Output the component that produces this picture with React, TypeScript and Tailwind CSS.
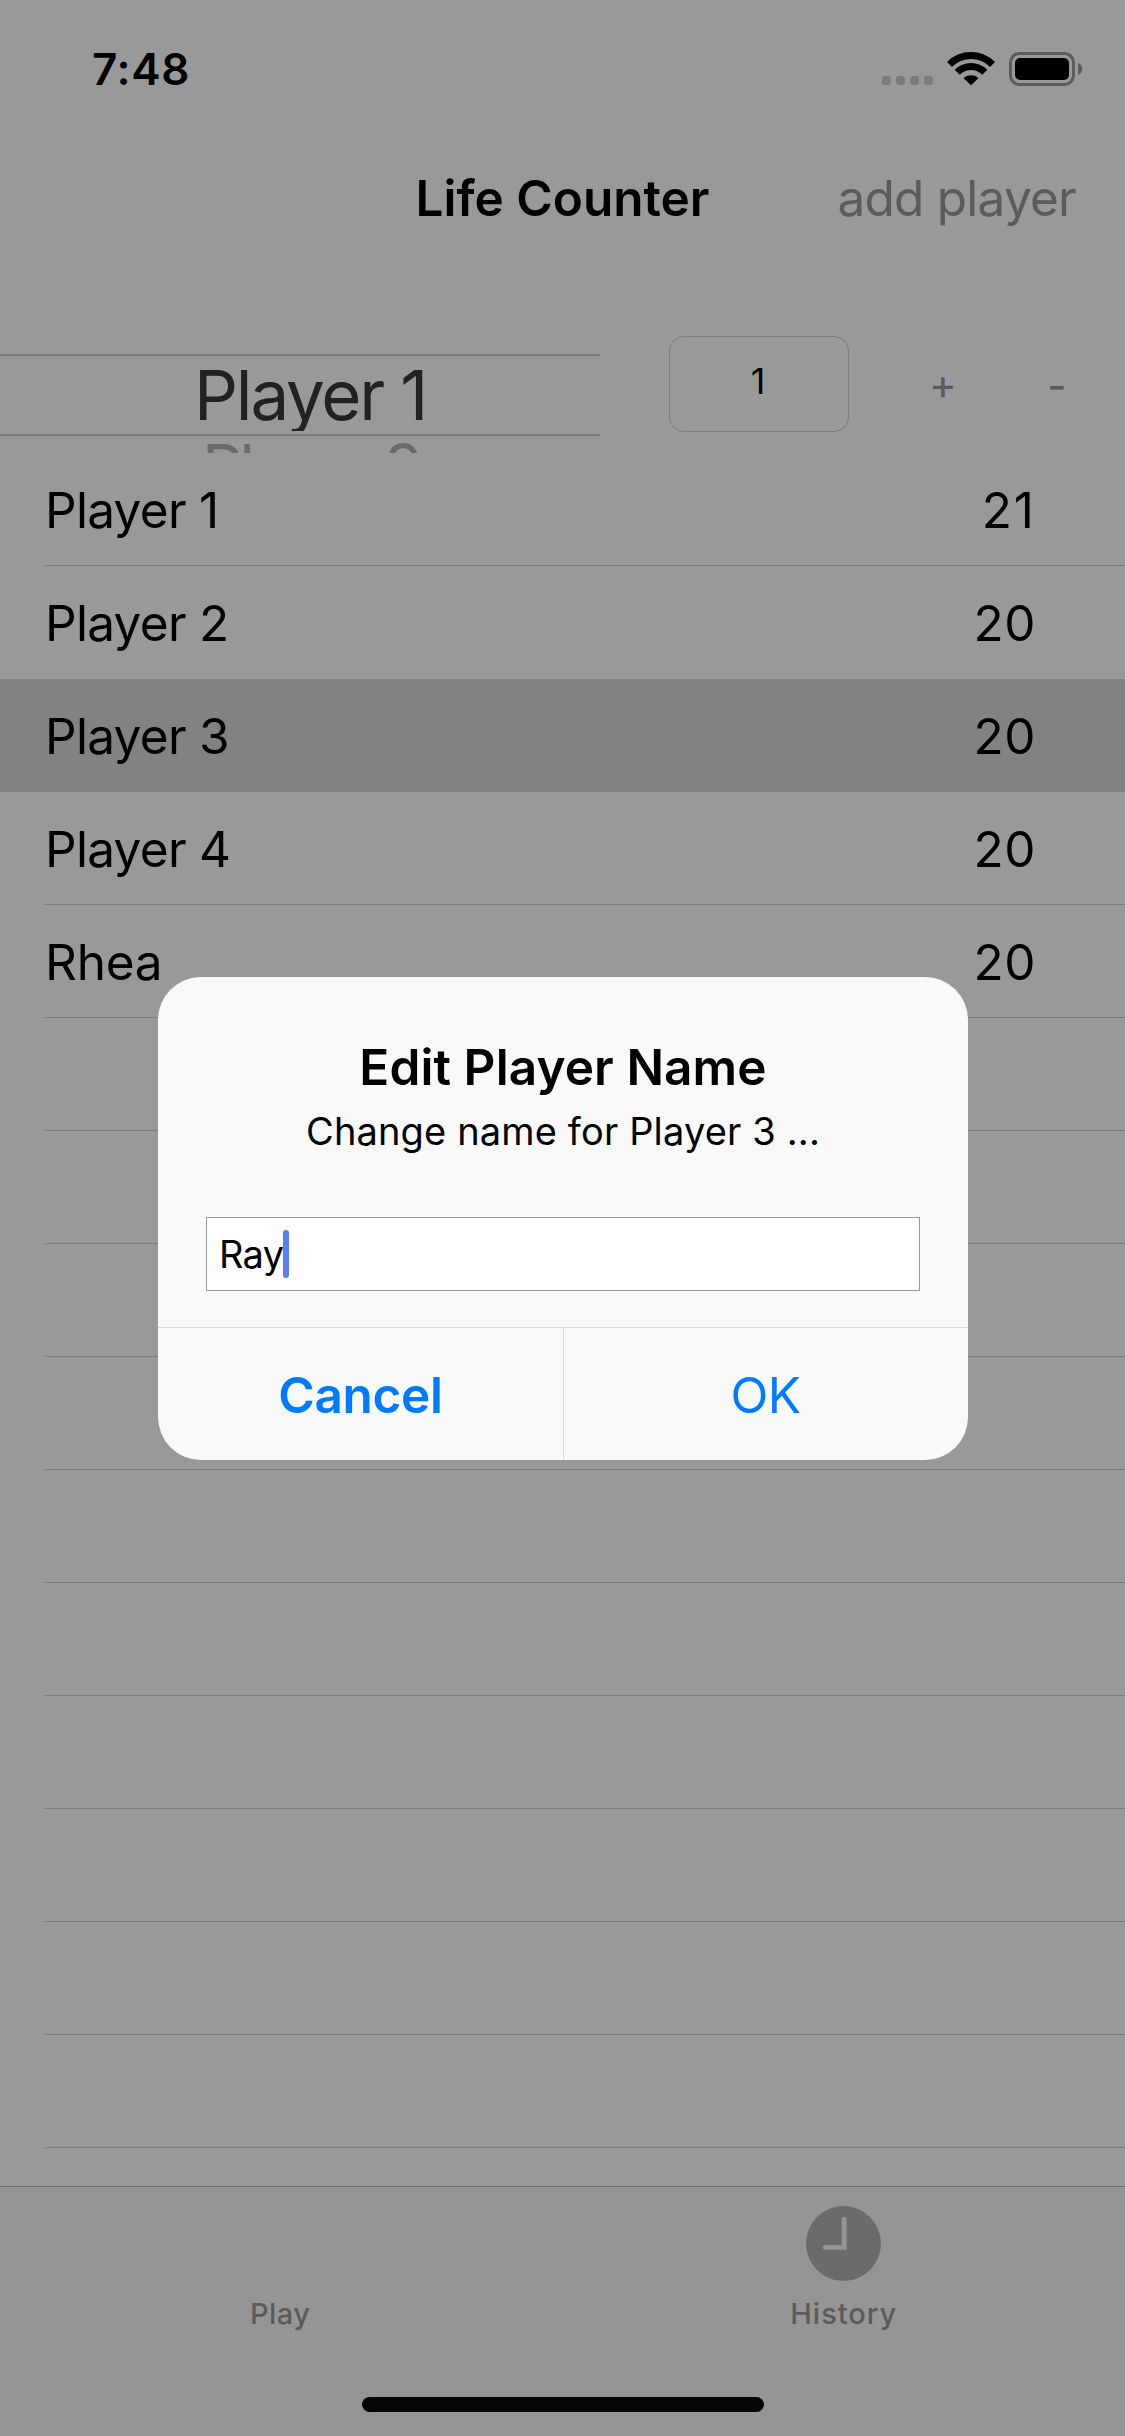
type Player = {
  name: string
  life: string
  nameTracking: string
  lifeTracking: string
  selected?: boolean
}

const players: Player[] = [
  { name: 'Player 1', life: '21', nameTracking: 'tracking-[-0.7px]', lifeTracking: 'tracking-[2px]' },
  { name: 'Player 2', life: '20', nameTracking: 'tracking-[-0.7px]', lifeTracking: 'tracking-[0.5px]' },
  { name: 'Player 3', life: '20', nameTracking: 'tracking-[-0.7px]', lifeTracking: 'tracking-[0.5px]', selected: true },
  { name: 'Player 4', life: '20', nameTracking: 'tracking-[-0.7px]', lifeTracking: 'tracking-[0.5px]' },
  { name: 'Rhea', life: '20', nameTracking: 'tracking-[-0.2px]', lifeTracking: 'tracking-[0.5px]' },
]

const emptyRows = Array.from({ length: 10 }, (_, i) => i)

function StatusIcons() {
  return (
    <svg width="204" height="40" viewBox="880 50 204 40" className="block" aria-hidden="true">
      <g fill="#7b7b7b">
        <rect x="882" y="76" width="9" height="9" rx="3" />
        <rect x="896" y="76" width="9" height="9" rx="3" />
        <rect x="910" y="76" width="9" height="9" rx="3" />
        <rect x="924" y="76" width="9" height="9" rx="3" />
      </g>
      <g fill="none" stroke="#000" strokeWidth="7">
        <path d="M949.5 64.4A30.5 30.5 0 0 1 992.5 64.4" />
        <path d="M957.2 72.2A19.5 19.5 0 0 1 984.8 72.2" />
      </g>
      <path
        d="M971 84.3L964.6 78.2A10 10 0 0 1 977.4 78.2Z"
        fill="#000"
        stroke="#000"
        strokeWidth="1.5"
        strokeLinejoin="round"
      />
      <rect x="1010.5" y="53.5" width="63" height="31" rx="9" fill="none" stroke="#5c5c5c" strokeWidth="3" />
      <rect x="1015" y="58" width="54" height="22" rx="5" fill="#000" />
      <path d="M1078 63C1080.6 64 1082.2 66.2 1082.2 69S1080.6 74 1078 75Z" fill="#5c5c5c" />
    </svg>
  )
}

function ClockIcon() {
  return (
    <svg width="75" height="75" viewBox="0 0 75 75" className="block" aria-hidden="true">
      <circle cx="37.5" cy="37.5" r="37.5" fill="#6b6b6b" />
      <path
        d="M38.2 13.4V41.4H19.2"
        fill="none"
        stroke="#959595"
        strokeWidth="4.8"
        strokeLinecap="round"
        strokeLinejoin="miter"
      />
    </svg>
  )
}

function StatusBar() {
  return (
    <div className="flex h-[132px] shrink-0 items-start justify-between pr-[41px] pl-[92px]">
      <span className="mt-[47px] text-[44px] leading-[44px] font-semibold tracking-[0.7px]">7:48</span>
      <div className="mt-[50px]">
        <StatusIcons />
      </div>
    </div>
  )
}

function NavBar() {
  return (
    <div className="grid h-[132px] shrink-0 grid-cols-[1fr_auto_1fr] items-center pt-[2px]">
      <span />
      <h1 className="text-[49.5px] leading-none font-semibold whitespace-nowrap">Life Counter</h1>
      <button className="justify-self-end pr-[49px] text-[49.5px] leading-none tracking-[-0.75px] whitespace-nowrap text-[#5b5b5b]">
        add player
      </button>
    </div>
  )
}

function Controls() {
  return (
    <div className="flex h-[189px] shrink-0">
      <div className="flex w-[600px] flex-col pt-[90px]">
        <div className="h-[82px] shrink-0 border-y-2 border-[#7b7b7b]">
          <div className="h-[75px] overflow-hidden pl-[194px] text-[69px] leading-[78px] tracking-[-2.2px] whitespace-nowrap text-[#222]">
            Player 1
          </div>
        </div>
        <div className="h-[17px] overflow-hidden pt-[9px] pl-[202px] text-[64px] leading-[46px] tracking-[-3.4px] whitespace-nowrap text-[#6b6b6b]">
          Player 2
        </div>
      </div>
      <div className="mt-[72px] ml-[69px] flex h-[96px] items-center">
        <div className="flex h-[96px] w-[180px] items-center justify-center rounded-[15px] border border-[#7b7b7b] pr-[2px] pb-[6px] text-[36px] leading-none">
          1
        </div>
        <button className="ml-[80px] w-[28px] text-center text-[42px] leading-none text-[#5b5b5b]">+</button>
        <button className="ml-[86px] w-[28px] pt-[4px] text-center text-[42px] leading-none text-[#5b5b5b]">-</button>
      </div>
    </div>
  )
}

function PlayerRow({ player }: { player: Player }) {
  return (
    <div className={player.selected ? 'h-[113px] bg-[#828282] pl-[45px]' : 'h-[113px] pl-[45px]'}>
      <div
        className={
          player.selected || player.name === 'Player 2'
            ? 'flex h-[113px] items-center justify-between border-b border-transparent pt-[4px] pr-[89px] text-[49.5px] leading-none'
            : 'flex h-[113px] items-center justify-between border-b border-[#7b7b7b] pt-[4px] pr-[89px] text-[49.5px] leading-none'
        }
      >
        <span className={player.nameTracking}>{player.name}</span>
        <span className={player.lifeTracking}>{player.life}</span>
      </div>
    </div>
  )
}

function TabBar() {
  return (
    <div className="flex h-[250px] shrink-0 flex-col items-center border-t border-[#6d6d6d] bg-[#959595] text-[29px] leading-[30px] font-medium text-[#5b5b5b]">
      <div className="grid h-[210px] w-full grid-cols-2 pt-[19px]">
        <div className="flex flex-col items-center pr-[2px]">
          <div className="h-[75px]" />
          <span className="mt-[18px] tracking-[0.5px]">Play</span>
        </div>
        <div className="flex flex-col items-center">
          <ClockIcon />
          <span className="mt-[18px] tracking-[1px]">History</span>
        </div>
      </div>
      <div className="h-[15px] w-[402px] rounded-full bg-[#060606]" />
    </div>
  )
}

function EditDialog() {
  return (
    <div
      role="dialog"
      className="absolute top-[977px] left-[158px] flex h-[483px] w-[810px] flex-col overflow-hidden rounded-[43px] bg-[#f9f9f9]"
    >
      <div className="flex h-[350px] flex-col items-center px-[48px] pt-[60px]">
        <h2 className="text-[49.5px] leading-[60px] font-semibold tracking-[0.1px] whitespace-nowrap">
          Edit Player Name
        </h2>
        <p className="mt-[9px] text-[38px] leading-[50px] tracking-[0.15px] whitespace-nowrap">
          Change name for Player 3 ...
        </p>
        <div className="mt-[61px] flex h-[74px] w-full items-center border border-[#999] bg-white pl-[12px]">
          <span className="text-[38px] leading-none tracking-[-0.7px]">Ray</span>
          <span className="h-[48px] w-[6px] rounded-[3px] bg-[#5b7df5]" />
        </div>
      </div>
      <div className="grid h-[133px] grid-cols-[405px_1fr] border-t border-[#d8d8d8] text-[49.5px] leading-none text-[#007aff]">
        <button className="pt-[4px] text-center font-semibold tracking-[-0.3px]">Cancel</button>
        <button className="border-l border-[#d8d8d8] pt-[4px] pr-[1px] text-center tracking-[-0.5px]">OK</button>
      </div>
    </div>
  )
}

export default function App() {
  return (
    <div className="relative flex h-[2436px] w-[1125px] flex-col overflow-hidden bg-[#999] font-['Inter',sans-serif] text-black">
      <StatusBar />
      <NavBar />
      <Controls />
      <div className="min-h-0 flex-1 overflow-hidden">
        {players.map((player) => (
          <PlayerRow key={player.name} player={player} />
        ))}
        {emptyRows.map((i) => (
          <div key={i} className="h-[113px] pl-[45px]">
            <div className="h-full border-b border-[#7b7b7b]" />
          </div>
        ))}
      </div>
      <TabBar />
      <EditDialog />
    </div>
  )
}
